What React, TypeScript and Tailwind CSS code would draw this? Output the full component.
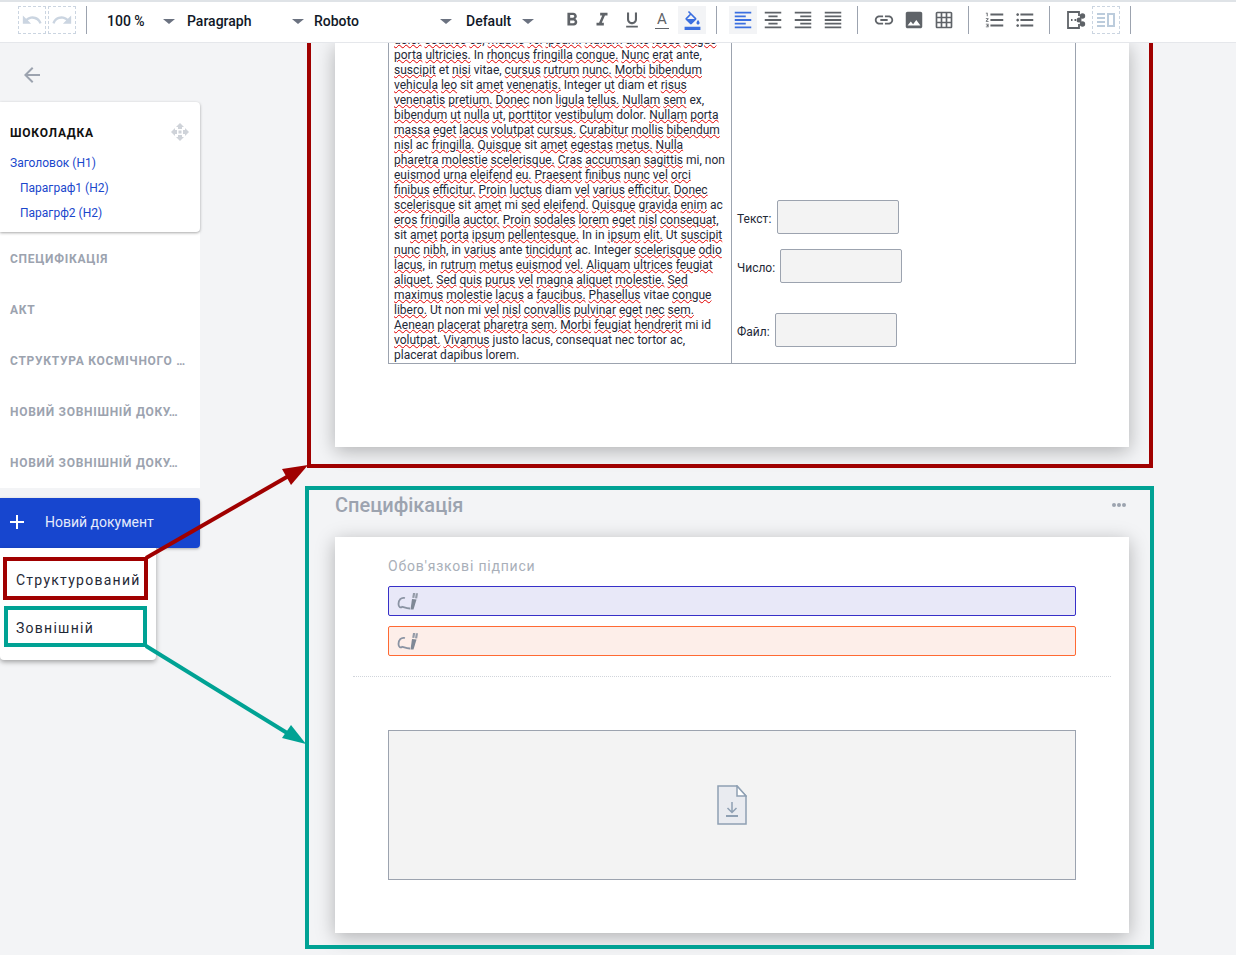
import React from 'react';
import {
  MdArrowBack,
  MdFormatAlignCenter,
  MdFormatAlignJustify,
  MdFormatAlignLeft,
  MdFormatAlignRight,
  MdFormatBold,
  MdFormatColorFill,
  MdFormatItalic,
  MdFormatListBulleted,
  MdFormatListNumbered,
  MdFormatUnderlined,
  MdGridOn,
  MdImage,
  MdLink,
  MdRedo,
  MdUndo,
} from 'react-icons/md';

// "~" marks a word the spell checker underlines
const bodyLines = [
  '~dolor ~sodales ~eu, ~mauris ~vel ~ipsum. ~Nullam ~ante ~lacus ~augue',
  '~porta ~ultricies. In ~rhoncus ~fringilla ~congue. ~Nunc ~erat ante,',
  '~suscipit et ~nisi vitae, ~cursus ~rutrum ~nunc. ~Morbi ~bibendum',
  '~vehicula ~leo sit ~amet ~venenatis. Integer ~ut diam et ~risus',
  '~venenatis ~pretium. ~Donec non ~ligula ~tellus. ~Nullam ~sem ex,',
  '~bibendum ~ut ~nulla ~ut, ~porttitor ~vestibulum dolor. ~Nullam ~porta',
  '~massa ~eget ~lacus ~volutpat ~cursus. ~Curabitur ~mollis ~bibendum',
  '~nisl ac ~fringilla. ~Quisque sit ~amet ~egestas ~metus. ~Nulla',
  '~pharetra ~molestie ~scelerisque. ~Cras ~accumsan ~sagittis mi, non',
  '~euismod ~urna ~eleifend ~eu. ~Praesent ~finibus ~nunc ~vel ~orci',
  '~finibus ~efficitur. ~Proin ~luctus diam ~vel ~varius ~efficitur. ~Donec',
  '~scelerisque sit ~amet mi ~sed ~eleifend. ~Quisque ~gravida ~enim ac',
  '~eros ~fringilla ~auctor. ~Proin ~sodales ~lorem ~eget ~nisl ~consequat,',
  'sit ~amet ~porta ~ipsum ~pellentesque. In in ~ipsum ~elit. Ut ~suscipit',
  '~nunc ~nibh, in ~varius ante ~tincidunt ac. Integer ~scelerisque ~odio',
  '~lacus, in ~rutrum ~metus ~euismod ~vel. ~Aliquam ~ultrices ~feugiat',
  '~aliquet. ~Sed ~quis ~purus ~vel ~magna ~aliquet ~molestie. ~Sed',
  '~maximus ~molestie ~lacus a ~faucibus. ~Phasellus vitae ~congue',
  '~libero. Ut non mi ~vel ~nisl ~convallis ~pulvinar ~eget ~nec ~sem.',
  '~Aenean ~placerat ~pharetra ~sem. ~Morbi ~feugiat ~hendrerit mi id',
  '~volutpat. ~Vivamus justo lacus, consequat nec tortor ac,',
  'placerat dapibus lorem.',
];

const docs = ['СПЕЦИФІКАЦІЯ', 'АКТ', 'СТРУКТУРА КОСМІЧНОГО …', 'НОВИЙ ЗОВНІШНІЙ ДОКУ…', 'НОВИЙ ЗОВНІШНІЙ ДОКУ…'];

const Caret = () => (
  <span className="mt-[2px] h-0 w-0 border-x-[6px] border-t-[5px] border-x-transparent border-t-[#6b7280]" />
);

const Sep = ({ className }: { className: string }) => <span className={`h-7 w-px bg-[#9ca3af] ${className}`} />;

const Tool = ({ children, className = '' }: { children: React.ReactNode; className?: string }) => (
  <span className={`flex h-7 w-7 shrink-0 items-center justify-center ${className}`}>{children}</span>
);

const Toolbar = () => (
  <div className="relative z-20 flex h-[43px] shrink-0 items-center border-t-2 border-b border-t-[#dfe3e7] border-b-[#e5e7eb] bg-white pb-[4px] pl-[18px] font-['Roboto',sans-serif] text-sm font-medium text-[#111827]">
    <Tool className="border border-dashed border-[#cbd5e1] text-[#cbd5e1]"><MdUndo size={22} /></Tool>
    <Tool className="ml-[2px] border border-dashed border-[#cbd5e1] text-[#cbd5e1]"><MdRedo size={22} /></Tool>
    <Sep className="ml-[10px]" />
    <span className="ml-[20px] w-[56px] pt-[2px]">100 %</span>
    <Caret />
    <span className="ml-[12px] w-[105px] pt-[2px]">Paragraph</span>
    <Caret />
    <span className="ml-[10px] w-[126px] pt-[2px]">Roboto</span>
    <Caret />
    <span className="ml-[14px] w-[56px] pt-[2px]">Default</span>
    <Caret />
    <Tool className="ml-[24px] text-[#5f6368]"><MdFormatBold size={22} /></Tool>
    <Tool className="ml-[2px] text-[#5f6368]"><MdFormatItalic size={22} /></Tool>
    <Tool className="ml-[2px] text-[#5f6368]"><MdFormatUnderlined size={20} /></Tool>
    <Tool className="ml-[2px] flex-col text-[15px] leading-none font-normal text-[#5f6368]">
      <span className="border-b border-[#5f6368] px-[2px] pb-[1px] leading-[15px]">A</span>
    </Tool>
    <Tool className="ml-[2px] bg-[#f3f4f6] text-[#3b6fe0]"><MdFormatColorFill size={19} /></Tool>
    <Sep className="ml-[10px]" />
    <Tool className="ml-[12px] bg-[#f3f4f6] text-[#3b6fe0]"><MdFormatAlignLeft size={22} /></Tool>
    <Tool className="ml-[2px] text-[#5f6368]"><MdFormatAlignCenter size={22} /></Tool>
    <Tool className="ml-[2px] text-[#5f6368]"><MdFormatAlignRight size={22} /></Tool>
    <Tool className="ml-[2px] text-[#5f6368]"><MdFormatAlignJustify size={22} /></Tool>
    <Sep className="ml-[10px]" />
    <Tool className="ml-[12px] text-[#5f6368]"><MdLink size={22} /></Tool>
    <Tool className="ml-[2px] text-[#5f6368]"><MdImage size={22} /></Tool>
    <Tool className="ml-[2px] text-[#5f6368]"><MdGridOn size={20} /></Tool>
    <Sep className="ml-[10px]" />
    <Tool className="ml-[12px] text-[#5f6368]"><MdFormatListNumbered size={22} /></Tool>
    <Tool className="ml-[2px] text-[#5f6368]"><MdFormatListBulleted size={22} /></Tool>
    <Sep className="ml-[10px]" />
    <Tool className="ml-[12px] text-[#5f6368]">
      <svg width="20" height="20" viewBox="0 0 20 20" fill="none" stroke="currentColor" strokeWidth="1.8">
        <path d="M13 6V2H2v16h11v-4" />
        <path d="M5 10h1.500M8.500 10h1.500" />
        <circle cx="16.500" cy="6" r="1.800" fill="currentColor" />
        <circle cx="16.500" cy="14" r="1.800" fill="currentColor" />
        <circle cx="13" cy="10" r="1.600" fill="currentColor" />
        <path d="M16.500 6L13 10l3.500 4" />
      </svg>
    </Tool>
    <Tool className="ml-[2px] border border-dashed border-[#cbd5e1]">
      <svg width="22" height="20" viewBox="0 0 22 20" fill="none" stroke="#bcccdc" strokeWidth="2">
        <path d="M2 4h8M2 8h8M2 12h8M2 16h8" />
        <rect x="13" y="4" width="6" height="12" />
      </svg>
    </Tool>
    <Sep className="ml-[10px]" />
  </div>
);

const Sidebar = () => (
  <aside className="flex w-[200px] shrink-0 flex-col font-['Roboto',sans-serif]">
    <div className="flex h-[59px] items-center pt-[5px] pl-[20px] text-[#9ca3af]">
      <MdArrowBack size={24} />
    </div>
    <div className="relative z-[1] h-[130px] rounded-r bg-white pt-[21px] pl-[10px] shadow-[0_1px_3px_rgba(0,0,0,0.35)]">
      <div className="flex h-[20px] items-center justify-between pr-[10px]">
        <span className="text-xs leading-[15px] font-bold tracking-[0.065em] text-[#111]">ШОКОЛАДКА</span>
        <svg className="-translate-y-px" width="20" height="20" viewBox="0 0 20 20" fill="#cfd3d9">
          <path d="M10 1l4 4h-2v2H8V5H6zM10 19l-4-4h2v-2h4v2h2zM1 10l4-4v2h2v4H5v2zM19 10l-4 4v-2h-2V8h2V6z" />
          <rect x="8.500" y="8.500" width="3" height="3" />
        </svg>
      </div>
      <div className="mt-[8px] text-xs leading-[25px] text-[#1a47cc]">
        <div>Заголовок (H1)</div>
        <div className="pl-[10px]">Параграф1 (H2)</div>
        <div className="pl-[10px]">Парагрф2 (H2)</div>
      </div>
    </div>
    <div className="h-[256px] bg-white pl-[10px]">
      {docs.map((doc, i) => (
        <div key={i} className="h-[51px] text-xs leading-[55px] font-bold tracking-[0.06em] text-[#9ca3af]">
          {doc}
        </div>
      ))}
    </div>
    <div className="mt-[10px] flex h-[50px] items-center rounded-r bg-[#1746cf] pb-[2px] pl-[9px] text-sm text-[#e5ebfb] shadow-[0_1px_3px_rgba(0,0,0,0.3)]">
      <svg width="16" height="16" viewBox="0 0 16 16" stroke="#fff" strokeWidth="2">
        <path d="M8 1v14M1 8h14" />
      </svg>
      <span className="ml-[20px]">Новий документ</span>
    </div>
    <div className="flex h-[112px] w-[156px] flex-col rounded-b bg-white pl-[16px] text-sm tracking-[0.09em] text-[#1f2937] shadow-[0_2px_5px_rgba(0,0,0,0.35)]">
      <span className="mt-[22px] leading-5">Структурований</span>
      <span className="mt-[28px] leading-5">Зовнішній</span>
    </div>
  </aside>
);

const SpellLine = ({ line }: { line: string }) => (
  <div className="whitespace-nowrap">
    {line.split(' ').map((word, i) => (
      <React.Fragment key={i}>
        {i > 0 && ' '}
        {word.startsWith('~') ? (
          <span className="underline decoration-[#e00000] decoration-wavy decoration-1 [text-underline-offset:0px]">{word.slice(1)}</span>
        ) : (
          word
        )}
      </React.Fragment>
    ))}
  </div>
);

const Field = ({ label, labelClass = 'mr-[5px]', className = '' }: { label: string; labelClass?: string; className?: string }) => (
  <div className={`flex items-center ${className}`}>
    <span className={`mt-[4px] ${labelClass}`}>{label}</span>
    <span className="h-[34px] w-[122px] rounded-[2px] border border-[#9ca3af] bg-[#f3f3f3]" />
  </div>
);

const SignIcon = () => (
  <svg width="22" height="20" viewBox="0 0 22 20" fill="none">
    <path d="M8 7C4 6 1.500 9 1.500 13c0 3 2 4 3.500 3M4.500 15.500c2 .5 5 2 8.500 2" stroke="#8a93a3" strokeWidth="1.800" />
    <path d="M13.500 18.500L15 8l4.500.5-3 10z" fill="#7f8896" />
    <path d="M15.200 6.800L16 2h2.200l-.8 5zM18 7.200l.8-5H21l-.8 5.200z" fill="#949ba8" />
  </svg>
);

const SignRow = ({ className }: { className: string }) => (
  <div className={`flex h-[30px] items-center rounded-[2px] border pl-[8px] ${className}`}>
    <SignIcon />
  </div>
);

const Annotations = () => (
  <>
    <div className="absolute top-[557px] left-[3px] z-10 h-[43px] w-[145px] border-4 border-[#a00000]" />
    <div className="absolute top-[606px] left-[4px] z-10 h-[41px] w-[143px] border-4 border-[#00a294]" />
    <div className="absolute top-[40px] left-[307px] z-10 h-[428px] w-[846px] border-x-4 border-b-4 border-[#a00000]" />
    <div className="absolute top-[486px] left-[305px] z-10 h-[463px] w-[849px] border-4 border-[#00a294]" />
    {/* pointers from the menu items to the two page types */}
    <svg className="absolute top-0 left-0 z-10" width="1236" height="955" fill="none">
      <path d="M146 558L292 474" stroke="#a00000" strokeWidth="4" />
      <polygon points="308,465 282,469 291,485" fill="#a00000" />
      <path d="M146 646L292 736" stroke="#00a294" strokeWidth="4" />
      <polygon points="306,744 291,725 282,738" fill="#00a294" />
    </svg>
  </>
);

export default function App() {
  return (
    <div className="relative flex h-[955px] w-[1236px] flex-col overflow-hidden bg-[#f3f4f6] font-['Roboto',sans-serif]">
      <Toolbar />
      <div className="flex min-h-0 flex-1">
        <Sidebar />
        <main className="ml-[135px] w-[794px]">
          <div className="flex h-[404px] flex-col justify-end overflow-hidden bg-white px-[53px] pb-[83px] shadow-[0_4px_18px_rgba(0,0,0,0.28)]">
            <div className="flex shrink-0 border-x border-b border-[#9ca3af] text-xs leading-[15px] text-[#1f2937]">
              <div className="w-[343px] shrink-0 border-r border-[#9ca3af] pl-[5px]">
                {bodyLines.map((line, i) => (
                  <SpellLine key={i} line={line} />
                ))}
              </div>
              <div className="flex flex-1 flex-col justify-end pb-[16px] pl-[5px]">
                <Field label="Текст:" labelClass="mr-[6px]" />
                <Field label="Число:" className="mt-[15px]" />
                <Field label="Файл:" className="mt-[30px]" />
              </div>
            </div>
          </div>
          <div className="mt-[42px] flex h-[32px] items-center justify-between pr-[3px]">
            <span className="text-xl font-medium text-[#9ca3af]">Специфікація</span>
            <span className="flex gap-[1px]">
              <i className="h-[4px] w-[4px] rounded-full bg-[#9ca3af]" />
              <i className="h-[4px] w-[4px] rounded-full bg-[#9ca3af]" />
              <i className="h-[4px] w-[4px] rounded-full bg-[#9ca3af]" />
            </span>
          </div>
          <div className="mt-[16px] h-[396px] bg-white pt-[19px] shadow-[0_4px_18px_rgba(0,0,0,0.28)]">
            <div className="px-[53px]">
              <div className="text-sm leading-[20px] tracking-[0.057em] text-[#a9afb9]">Обов'язкові підписи</div>
              <SignRow className="mt-[10px] border-[#3730c8] bg-[#e8e8f8]" />
              <SignRow className="mt-[10px] border-[#ff6a33] bg-[#fdeee9]" />
            </div>
            <div className="mx-[18px] mt-[20px] border-t border-dotted border-[#d1d5db]" />
            <div className="mx-[53px] mt-[53px] flex h-[150px] items-center justify-center border border-[#9ca3af] bg-[#f3f3f3]">
              <svg width="30" height="40" viewBox="0 0 30 40" fill="none">
                <path d="M1 1h19l9 10v28H1z" fill="#e9ebf0" stroke="#8fa0b3" strokeWidth="1.500" />
                <path d="M20 1v10h9z" fill="#fff" stroke="#8fa0b3" strokeWidth="1.500" />
                <path d="M15 17v10M10.500 23l4.500 4.500 4.500-4.500" stroke="#8fa0b3" strokeWidth="1.500" />
                <path d="M9 31h12" stroke="#8fa0b3" strokeWidth="2" />
              </svg>
            </div>
          </div>
        </main>
      </div>
      <Annotations />
    </div>
  );
}
